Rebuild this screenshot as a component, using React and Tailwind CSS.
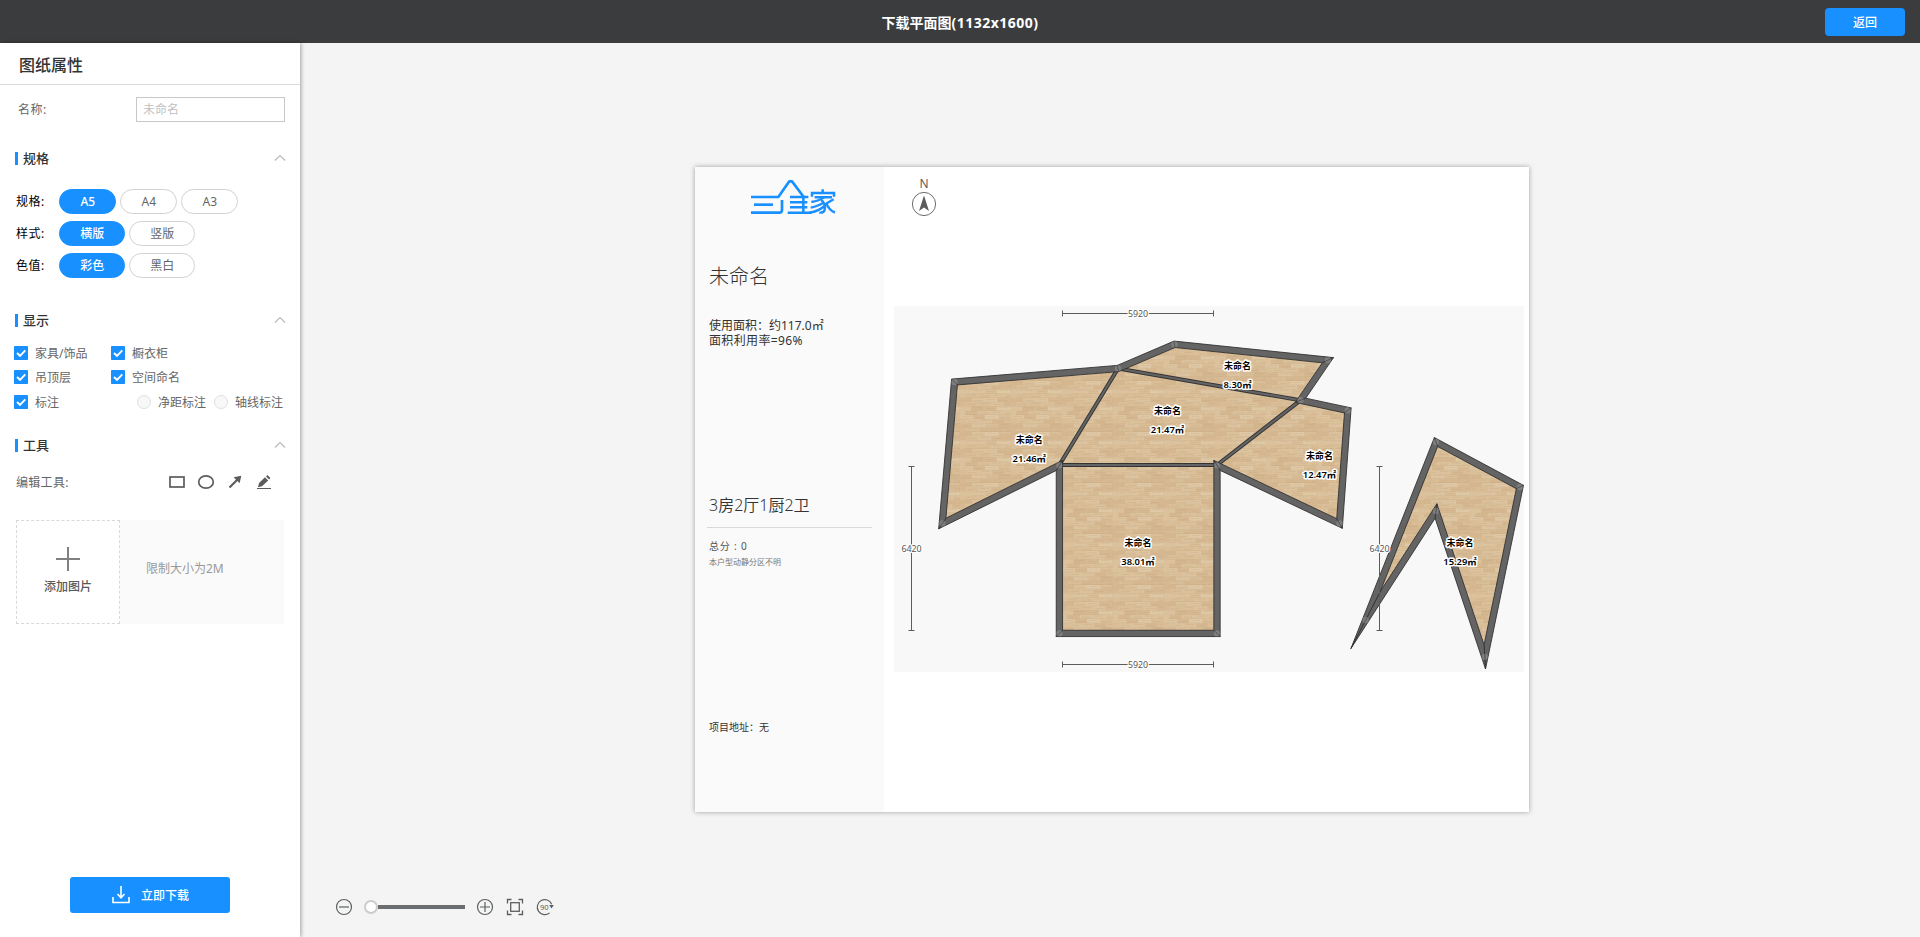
import React from "react";

const INNER = 3.15;

const HOUSE = [
  [954.5, 382], [1118, 368.5], [1174.5, 344.3], [1327.9, 360.2], [1300.5, 400.3], [1347.8, 410.4],
  [1339.5, 523.5], [1217, 465.4], [1217, 633.4], [1059.4, 633.4], [1059.4, 465.4], [942.3, 523.5],
];
const WING = [[1436, 442], [1519.9, 487], [1484.8, 656.9], [1436, 511], [1365.6, 620]];
const PARTITIONS = [
  [[1059.4, 465], [1217, 465]],
  [[1059.4, 465], [1118, 368.5]],
  [[1118, 368.5], [1300.5, 400.3]],
  [[1300.5, 400.3], [1217, 465]],
];
const ROOMS = [
  { x: 1029.3, y: 439.3, area: "21.46㎡" },
  { x: 1167.5, y: 410.3, area: "21.47㎡" },
  { x: 1237.5, y: 365.3, area: "8.30㎡" },
  { x: 1319.5, y: 455.3, area: "12.47㎡" },
  { x: 1138, y: 542.5, area: "38.01㎡" },
  { x: 1460, y: 542.5, area: "15.29㎡" },
];

// Mitred offset of every vertex, d > 0 to the left of the walking direction.
function offset(points, d) {
  const n = points.length;
  return points.map((p, i) => {
    const a = points[(i + n - 1) % n];
    const b = points[(i + 1) % n];
    const l1 = Math.hypot(p[0] - a[0], p[1] - a[1]);
    const l2 = Math.hypot(b[0] - p[0], b[1] - p[1]);
    const n1 = [(p[1] - a[1]) / l1, -(p[0] - a[0]) / l1];
    const n2 = [(b[1] - p[1]) / l2, -(b[0] - p[0]) / l2];
    const k = d / (1 + n1[0] * n2[0] + n1[1] * n2[1]);
    return [p[0] + (n1[0] + n2[0]) * k, p[1] + (n1[1] + n2[1]) * k];
  });
}
const str = (pts) => pts.map((p) => p.map((v) => v.toFixed(2)).join(",")).join(" ");

function Walls({ points }) {
  const out = offset(points, INNER);
  const inn = offset(points, -INNER);
  return (
    <g>
      {points.map((_, i) => {
        const j = (i + 1) % points.length;
        return <polygon key={i} points={str([out[i], out[j], inn[j], inn[i]])} fill="#646464" stroke="#333" strokeWidth="0.9" strokeLinejoin="bevel" />;
      })}
      {points.map((p, i) => <circle key={i} cx={p[0]} cy={p[1]} r="3.2" fill="#fff" fillOpacity="0.17" />)}
    </g>
  );
}

function Wood() {
  const tones = ["#dfc8a5", "#d4b68d", "#e3ceae", "#d9be98", "#d1b389", "#dcc39f"];
  const planks = [];
  for (let r = 0; r < 12; r++) {
    const shift = (r * 19) % 51;
    [0, 13, 25, 38].forEach((x, k) => {
      const c = tones[(r * 5 + k * 7 + ((r * k) % 4)) % 6];
      const px = (x + shift) % 51;
      planks.push(
        <g key={r + "-" + k}>
          <rect x={px} y={r * 4.25} width="13" height="4.25" fill={c} opacity="0.6" />
          <rect x={px - 51} y={r * 4.25} width="13" height="4.25" fill={c} opacity="0.6" />
          <rect x={px + 2} y={r * 4.25 + 1 + (k % 2)} width="9" height="0.6" fill="#b08b5e" opacity="0.24" />
          <rect x={px} y={r * 4.25 + 3.8} width="12" height="0.45" fill="#a88358" opacity="0.3" />
        </g>
      );
    });
  }
  return (
    <pattern id="wood" width="51" height="51" patternUnits="userSpaceOnUse" x="1062" y="466">
      <rect width="51" height="51" fill="#d9bf99" />
      {planks}
    </pattern>
  );
}

function Label({ x, y, size, bold, weight, children }) {
  return (
    <text x={x} y={y} fontSize={size} fontWeight={weight || 400} fill={bold ? "#000" : "#555"} stroke="#fff" strokeWidth={bold ? 3 : 2.2} strokeLinejoin="round" paintOrder="stroke" textAnchor="middle" dominantBaseline="central">
      {children}
    </text>
  );
}

function Dimension({ x1, y1, x2, y2, value }) {
  const h = y1 === y2;
  const caps = h ? `M${x1} ${y1 - 3}v6M${x2} ${y1 - 3}v6` : `M${x1 - 3} ${y1}h6M${x1 - 3} ${y2}h6`;
  return (
    <g>
      <path d={`M${x1} ${y1}L${x2} ${y2}${caps}`} stroke="#5c5c5c" strokeWidth="1" fill="none" />
      <Label x={(x1 + x2) / 2} y={(y1 + y2) / 2} size={8.8}>{value}</Label>
    </g>
  );
}

function FloorPlan() {
  return (
    <svg className="block h-[366px] w-[630px] bg-[#f8f8f8]" viewBox="894 306 630 366">
      <defs><Wood /></defs>
      <polygon points={str(HOUSE)} fill="url(#wood)" />
      <polygon points={str(WING)} fill="url(#wood)" />
      {PARTITIONS.map(([a, b], i) => (
        <g key={i}>
          <line x1={a[0]} y1={a[1]} x2={b[0]} y2={b[1]} stroke="#333" strokeWidth="4.1" />
          <line x1={a[0]} y1={a[1]} x2={b[0]} y2={b[1]} stroke="#646464" strokeWidth="2.2" />
        </g>
      ))}
      <Walls points={HOUSE} />
      <Walls points={WING} />
      <Dimension x1={1062.5} y1={313.5} x2={1213.5} y2={313.5} value="5920" />
      <Dimension x1={1062.5} y1={664.5} x2={1213.5} y2={664.5} value="5920" />
      <Dimension x1={911.5} y1={466.5} x2={911.5} y2={630.5} value="6420" />
      <Dimension x1={1379.5} y1={466.5} x2={1379.5} y2={630.5} value="6420" />
      {ROOMS.map((r) => (
        <g key={r.area}>
          <Label x={r.x} y={r.y} size={9} bold weight={700}>未命名</Label>
          <Label x={r.x} y={r.y + 18.9} size={9.4} bold weight={600}>{r.area}</Label>
        </g>
      ))}
    </svg>
  );
}

function Logo() {
  return (
    <svg className="h-[36px] w-[86px]" viewBox="31 21 258 108" fill="none" stroke="#1890ff" strokeWidth="8">
      <path d="M34 75H116L149 28H157L190 72" strokeLinejoin="round" />
      <path d="M43 98H100" />
      <path d="M34 122H119Q127 122 127 114V84" />
      <path d="M151 75H206M151 91H203M151 106H203M144 122H216M191 70V122" strokeWidth="7.5" />
      <path d="M217 74V63H283V74M249 52V63M225 76H277" strokeWidth="7.5" />
      <path d="M253 76Q239 86 215 90M245 84Q259 96 255 113Q253 123 239 122M251 92Q237 102 213 107M255 101Q239 118 209 122M282 82L259 95M259 92Q267 114 286 122" strokeWidth="7" />
    </svg>
  );
}

function Section({ title, children, className }) {
  return (
    <section className={className}>
      <div className="flex h-[20px] items-center pr-[14px] pl-[15px]">
        <span className="h-[13px] w-[3px] bg-[#1890ff]" />
        <h2 className="ml-[5px] flex-1 text-[13px] leading-[20px] font-medium text-[#333]">{title}</h2>
        <svg className="h-[8px] w-[12px]" viewBox="0 0 12 8" fill="none" stroke="#bbb" strokeWidth="1.2"><path d="M1 6.5L6 1.5L11 6.5" /></svg>
      </div>
      {children}
    </section>
  );
}

function Pill({ active, wide, children }) {
  return (
    <button className={"flex h-[25px] items-center justify-center rounded-full border text-[12px] leading-none " + (wide ? "w-[66px] pt-px " : "w-[57px] ") + (active ? "border-[#1890ff] bg-[#1890ff] font-medium text-white" : "border-[#d2d2d2] bg-white text-[#666]")}>
      {children}
    </button>
  );
}

function PillRow({ label, children }) {
  return (
    <div className="flex h-[25px] items-center pl-[16px]">
      <span className="w-[43.25px] text-[12px] tracking-[0.5px] text-black">{label}</span>
      <div className="flex gap-[4px]">{children}</div>
    </div>
  );
}

function Check({ children, className }) {
  return (
    <label className={"flex h-[14px] items-center gap-[7px] text-[12px] leading-[14px] text-[#666] " + className}>
      <svg className="h-[14px] w-[14px] shrink-0" viewBox="0 0 14 14"><rect width="14" height="14" rx="0.8" fill="#1890ff" /><path d="M3 7L6 9.8L11.3 4.4" fill="none" stroke="#fff" strokeWidth="1.9" /></svg>
      <span className="pt-[2px]">{children}</span>
    </label>
  );
}

function Radio({ children }) {
  return (
    <label className="flex h-[14px] items-center gap-[7px] text-[12px] leading-[14px] text-[#666]">
      <span className="h-[14px] w-[14px] shrink-0 rounded-full border border-[#e0e0e0] bg-[#f8f8f8]" />
      <span className="pt-[2px]">{children}</span>
    </label>
  );
}

export default function App() {
  return (
    <div className="flex h-[937px] w-[1920px] flex-col overflow-hidden bg-[#f4f4f4] font-['Noto_Sans','Noto_Sans_CJK_SC',sans-serif]">
      <header className="grid h-[43px] shrink-0 grid-cols-3 items-center bg-[#3b3c3e] text-white">
        <span />
        <h1 className="pt-[2px] text-center text-[14px] leading-[20px] font-bold">下载平面图<span className="tracking-[0.5px]">(1132x1600)</span></h1>
        <button className="mt-px mr-[15px] flex h-[28px] w-[80px] items-center justify-center justify-self-end rounded-[4px] bg-[#1890ff] pt-[2px] text-[12px] font-medium">返回</button>
      </header>
      <div className="flex min-h-0 flex-1">
        <aside className="relative z-10 flex w-[300px] shrink-0 flex-col bg-white shadow-[1px_0_4px_rgba(0,0,0,0.35)]">
          <div className="flex h-[42px] items-center border-b border-[#d9d9d9] pt-[3px] pl-[19px] text-[16px] leading-none font-medium text-[#333]">图纸属性</div>
          <div className="mt-[12px] flex h-[25px] items-center justify-between pr-[15px] pl-[18px] text-[12px] text-[#666]">
            <span className="pt-px tracking-[0.5px]">名称:</span>
            <input className="h-[25px] w-[149px] border border-[#c8c8c8] px-[6px] text-[12px] outline-none placeholder:text-[#bfbfbf]" placeholder="未命名" />
          </div>
          <Section title="规格" className="mt-[26px]">
            <div className="mt-[21px] flex flex-col gap-[7px]">
              <PillRow label="规格:"><Pill active>A5</Pill><Pill>A4</Pill><Pill>A3</Pill></PillRow>
              <PillRow label="样式:"><Pill active wide>横版</Pill><Pill wide>竖版</Pill></PillRow>
              <PillRow label="色值:"><Pill active wide>彩色</Pill><Pill wide>黑白</Pill></PillRow>
            </div>
          </Section>
          <Section title="显示" className="mt-[32px]">
            <div className="mt-[16px] flex flex-col gap-[10px] pl-[14px]">
              <div className="flex"><Check className="w-[97px]">家具/饰品</Check><Check className="">橱衣柜</Check></div>
              <div className="flex"><Check className="w-[97px]">吊顶层</Check><Check className="">空间命名</Check></div>
              <div className="mt-px flex"><Check className="w-[123px]">标注</Check><div className="flex gap-[8px]"><Radio>净距标注</Radio><Radio>轴线标注</Radio></div></div>
            </div>
          </Section>
          <Section title="工具" className="mt-[26px]">
            <div className="mt-[17px] flex h-[20px] items-center pl-[16px] text-[12px] text-[#666]">
              <span className="w-[152px] pt-[2px] tracking-[0.3px]">编辑工具:</span>
              <svg className="h-[20px] w-[106px]" viewBox="168 472 106 20" fill="none" stroke="#5c5c5c" strokeWidth="2">
                <rect x="170" y="477" width="14" height="10" strokeWidth="1.7" />
                <ellipse cx="206" cy="482" rx="7.3" ry="6.2" strokeWidth="1.7" />
                <path d="M229.5 487.5L238 479" strokeWidth="2.2" />
                <path d="M241.3 475.8L239.6 483.3L233.6 477.3Z" fill="#5c5c5c" stroke="none" />
                <path d="M258 487.2L259 483L265 477.3L268.2 480.5L262 486.2ZM266 476.4L267.5 475L270.4 478L269.1 479.5Z" fill="#5c5c5c" stroke="none" />
                <path d="M257 488.5H271" strokeWidth="1" />
              </svg>
            </div>
            <div className="mt-[28px] ml-[16px] flex h-[104px] w-[268px] bg-[#fafafa]">
              <div className="flex w-[104px] flex-col items-center border border-dashed border-[#d9d9d9] bg-white pt-[26px]">
                <svg className="h-[24px] w-[24px]" viewBox="0 0 24 24" stroke="#808080" strokeWidth="2"><path d="M12 0V24M0 12H24" /></svg>
                <span className="mt-[7px] text-[12px] leading-[18px] font-medium text-[#595959]">添加图片</span>
              </div>
              <span className="mt-[40px] ml-[26px] text-[12px] leading-[18px] text-[#999]">限制大小为2M</span>
            </div>
          </Section>
          <button className="mt-auto mb-[24px] ml-[70px] flex h-[36px] w-[160px] items-center rounded-[3px] bg-[#1890ff] pl-[42px] text-[12px] font-medium text-white">
            <svg className="h-[18px] w-[18px]" viewBox="0 0 18 18" fill="none" stroke="#fff" strokeWidth="1.6"><path d="M1 11V16.5H17V11M9 0V11M5.5 8L9 11.8L12.5 8" /></svg>
            <span className="ml-[11px] pt-[2px]">立即下载</span>
          </button>
        </aside>
        <main className="relative flex flex-1 items-center justify-center pb-px pl-[4px]">
          <div className="flex h-[645px] w-[834px] bg-white text-[#333] shadow-[0_0_5px_rgba(0,0,0,0.35)]">
            <div className="flex w-[189px] flex-col bg-[#fafafa] pl-[14px]">
              <div className="mt-[12px] ml-[41px]"><Logo /></div>
              <div className="mt-[47px] text-[20px] leading-[30px] font-light">未命名</div>
              <div className="mt-[26px] text-[12px] leading-[15px]">使用面积：约117.0㎡<br /><span className="tracking-[0.35px]">面积利用率=96%</span></div>
              <div className="mt-[145px] text-[16px] leading-[24px] font-[350]">3房2厅1厨2卫</div>
              <div className="mt-[10px] -ml-[2px] h-px w-[165px] bg-[#d9d9d9]" />
              <div className="mt-[10px] text-[10px] leading-[16px] tracking-[0.8px] text-[#555]">总分 : 0</div>
              <div className="text-[8px] leading-[16px] text-[#777]">本户型动静分区不明</div>
              <div className="mt-[149px] text-[10px] leading-[16px]">项目地址：无</div>
            </div>
            <div className="flex flex-1 flex-col pl-[10px]">
              <div className="flex h-[139px] w-[60px] flex-col items-center pt-[9px] text-[12px] leading-[15px] text-[#5c5c5c]">
                <span>N</span>
                <svg className="h-[26px] w-[26px]" viewBox="-13 -13 26 26"><circle r="11.6" fill="none" stroke="#5c5c5c" strokeWidth="0.9" /><path d="M0 -8.5L5 7L0 3.5L-5 7Z" fill="#5c5c5c" /></svg>
              </div>
              <FloorPlan />
            </div>
          </div>
          <div className="absolute bottom-[20px] left-[35px] flex h-[20px] items-center text-[#5c5f61]">
            <svg className="h-[18px] w-[18px]" viewBox="-9 -9 18 18" fill="none" stroke="currentColor" strokeWidth="1.2"><circle r="7.5" /><path d="M-5 0H5" /></svg>
            <div className="ml-[11px] flex items-center">
              <span className="h-[14px] w-[14px] rounded-full border-2 border-[#ccc] bg-white" />
              <span className="h-[4px] w-[87px] bg-[#6b6e70]" />
            </div>
            <svg className="ml-[11px] h-[18px] w-[18px]" viewBox="-9 -9 18 18" fill="none" stroke="currentColor" strokeWidth="1.2"><circle r="7.5" /><path d="M-5 0H5M0 -5V5" /></svg>
            <svg className="ml-[12px] h-[18px] w-[18px]" viewBox="-9 -9 18 18" fill="none" stroke="currentColor" strokeWidth="1.3"><rect x="-4.3" y="-4.3" width="8.6" height="8.6" /><path d="M-7.5 -3.5V-7.5H-3.5M3.5 -7.5H7.5V-3.5M7.5 3.5V7.5H3.5M-3.5 7.5H-7.5V3.5" /></svg>
            <svg className="ml-[12px] h-[18px] w-[20px]" viewBox="-9 -9 20 18" fill="none" stroke="currentColor" strokeWidth="1.2">
              <path d="M4.6 5.9A7.5 7.5 0 1 1 6.7 -2.8" />
              <path d="M4.2 -2H8.8L6.5 1.5Z" fill="currentColor" stroke="none" />
              <text x="-0.8" y="0.3" fontSize="7.5" fill="currentColor" stroke="none" textAnchor="middle" dominantBaseline="central">90</text>
            </svg>
          </div>
        </main>
      </div>
    </div>
  );
}
